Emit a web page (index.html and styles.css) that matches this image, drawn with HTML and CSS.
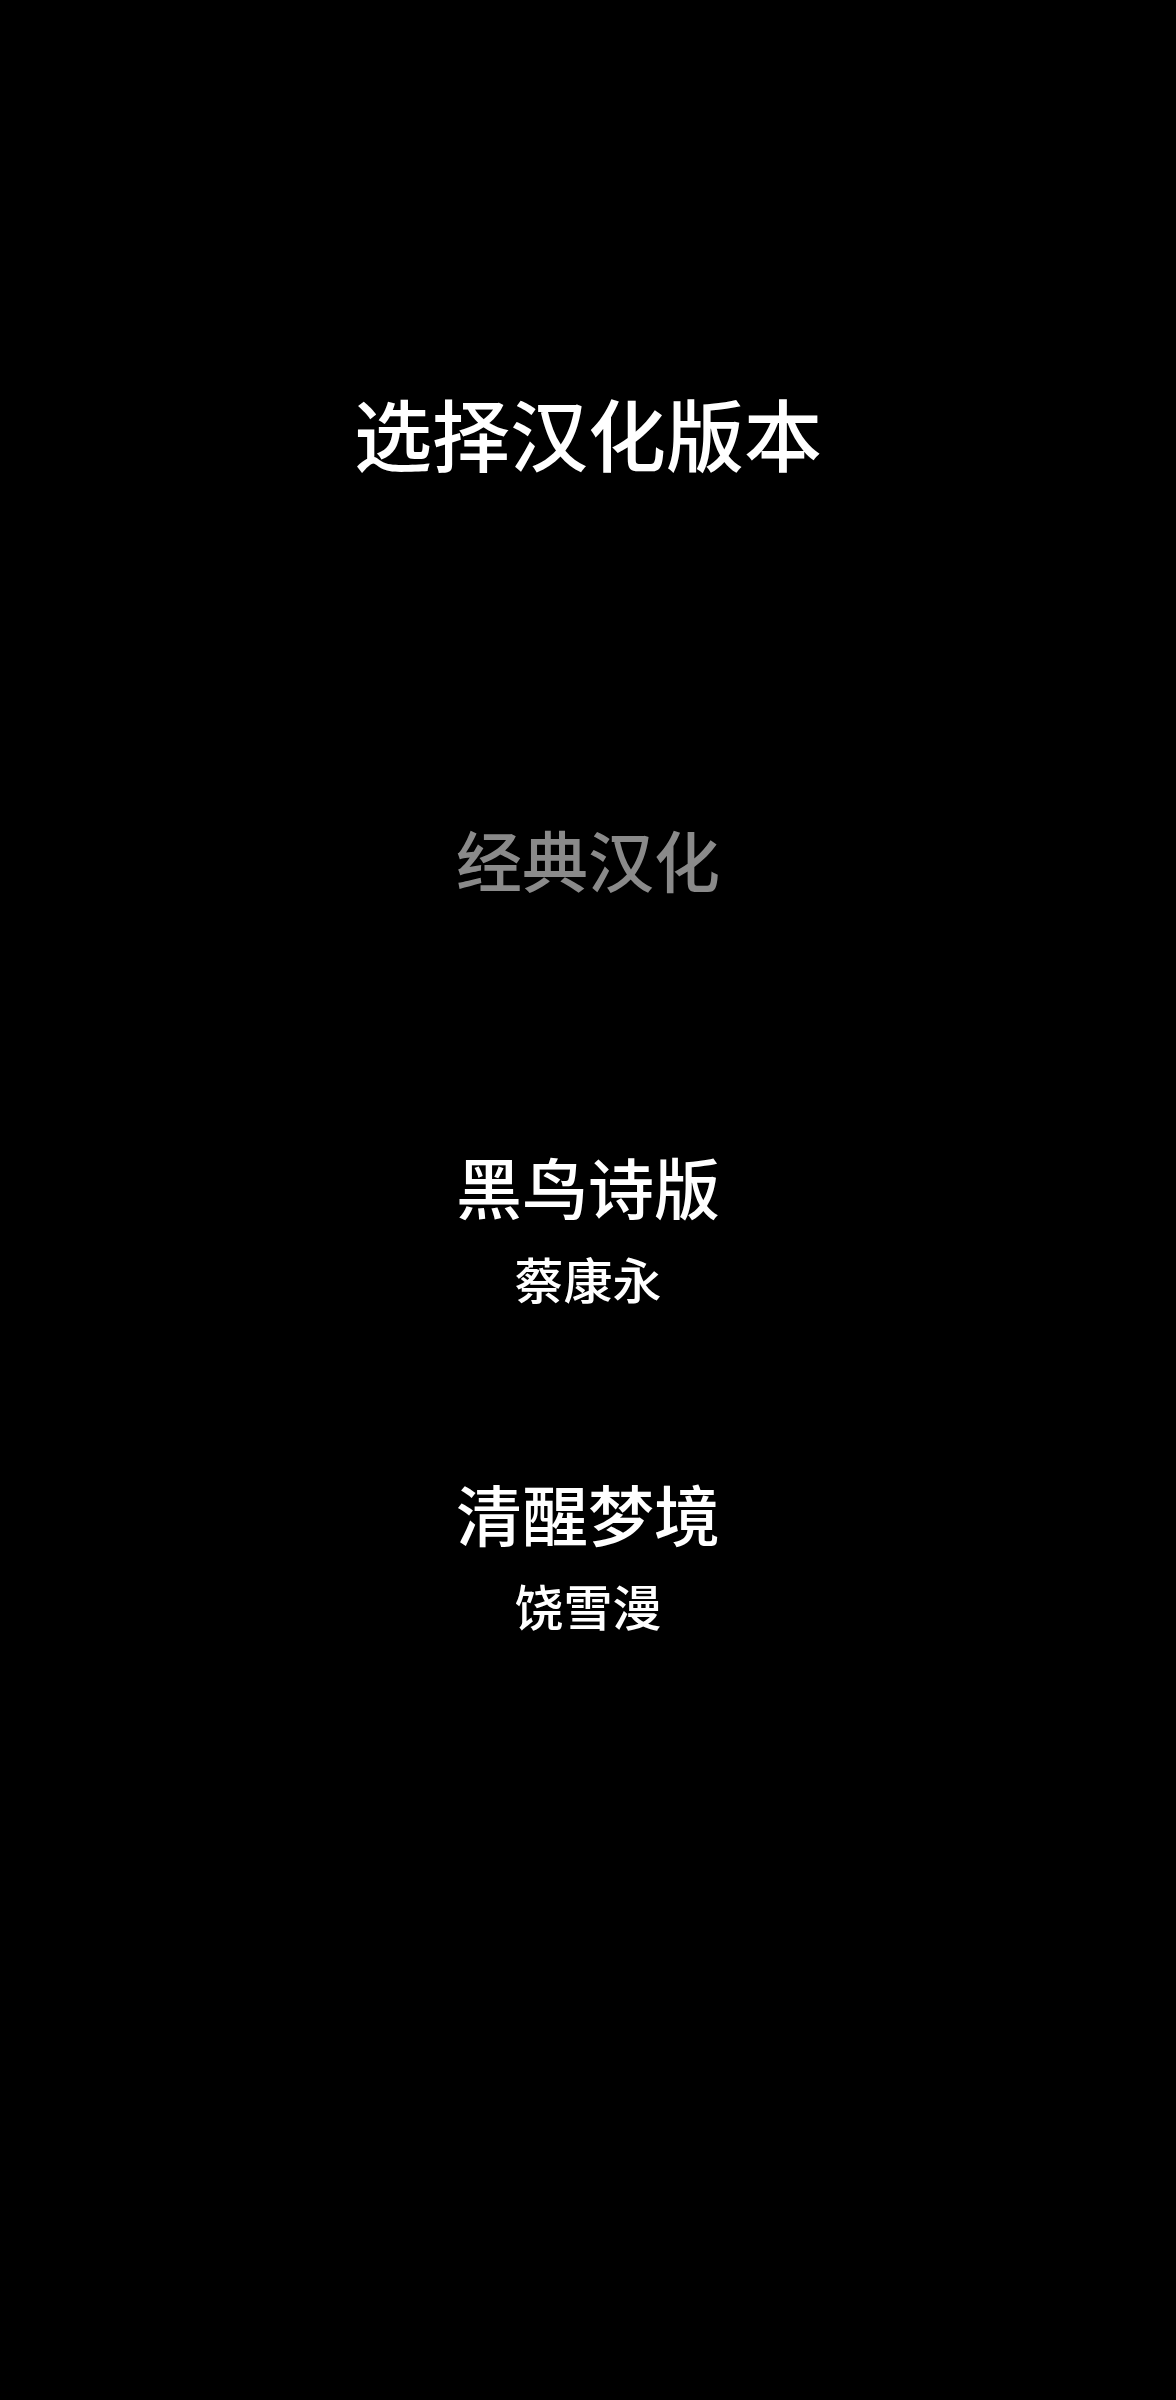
FILE: index.html
```html
<!DOCTYPE html>
<html lang="zh-CN">
<head>
<meta charset="utf-8">
<title>选择汉化版本</title>
<link rel="stylesheet" href="styles.css">
</head>
<body>
<main class="page">
  <h1 class="title">选择汉化版本</h1>
  <ul class="versions">
    <li class="version version--current">
      <div class="version-name">经典汉化</div>
      <div class="version-author"></div>
    </li>
    <li class="version">
      <div class="version-name">黑鸟诗版</div>
      <div class="version-author">蔡康永</div>
    </li>
    <li class="version">
      <div class="version-name">清醒梦境</div>
      <div class="version-author">饶雪漫</div>
    </li>
  </ul>
</main>
</body>
</html>
```
FILE: styles.css
```css
html, body {
  margin: 0;
  padding: 0;
  background: #000;
}
body {
  font-family: "Noto Sans CJK SC", "Noto Sans", sans-serif;
  color: #fff;
  min-height: 2400px;
}
.page {
  display: flex;
  flex-direction: column;
  align-items: center;
  padding-top: 393px;
}
.title {
  margin: 0;
  font-size: 78px;
  line-height: 1;
  font-weight: 500;
  letter-spacing: 0;
}
.versions {
  list-style: none;
  margin: 354px 0 0;
  padding: 0;
  display: flex;
  flex-direction: column;
  align-items: center;
  gap: 177px;
}
.version {
  display: flex;
  flex-direction: column;
  align-items: center;
  gap: 35px;
}
.version-name {
  font-size: 66px;
  line-height: 1;
  font-weight: 500;
}
.version-author {
  font-size: 49px;
  line-height: 1;
  height: 49px;
  font-weight: 500;
}
.version--current .version-name {
  color: #8a8a8a;
}
```
